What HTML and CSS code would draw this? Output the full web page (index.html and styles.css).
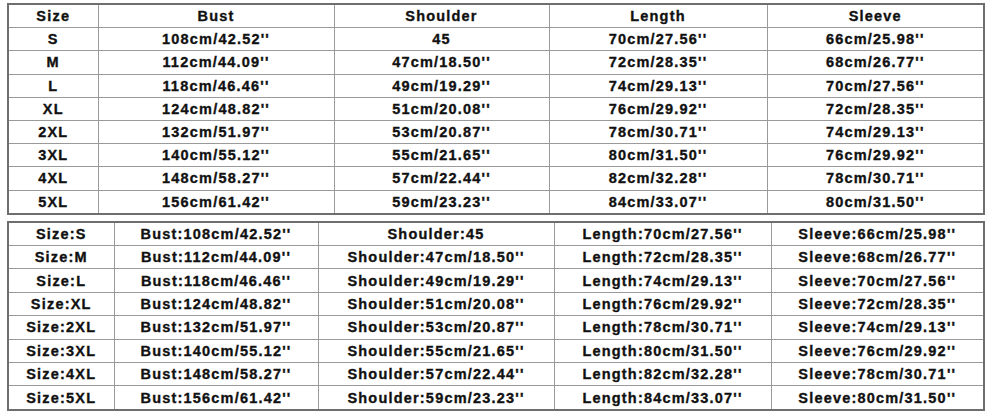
FILE: index.html
```html
<!DOCTYPE html>
<html>
<head>
<meta charset="utf-8">
<link rel="stylesheet" href="styles.css">
</head>
<body>
<div class="page">
<table class="chart chart-top">
<colgroup><col class="c1"><col class="c2"><col class="c3"><col class="c4"><col class="c5"></colgroup>
<tr><td>Size</td><td>Bust</td><td>Shoulder</td><td>Length</td><td>Sleeve</td></tr>
<tr><td>S</td><td>108cm/42.52''</td><td>45</td><td>70cm/27.56''</td><td>66cm/25.98''</td></tr>
<tr><td>M</td><td>112cm/44.09''</td><td>47cm/18.50''</td><td>72cm/28.35''</td><td>68cm/26.77''</td></tr>
<tr><td>L</td><td>118cm/46.46''</td><td>49cm/19.29''</td><td>74cm/29.13''</td><td>70cm/27.56''</td></tr>
<tr><td>XL</td><td>124cm/48.82''</td><td>51cm/20.08''</td><td>76cm/29.92''</td><td>72cm/28.35''</td></tr>
<tr><td>2XL</td><td>132cm/51.97''</td><td>53cm/20.87''</td><td>78cm/30.71''</td><td>74cm/29.13''</td></tr>
<tr><td>3XL</td><td>140cm/55.12''</td><td>55cm/21.65''</td><td>80cm/31.50''</td><td>76cm/29.92''</td></tr>
<tr><td>4XL</td><td>148cm/58.27''</td><td>57cm/22.44''</td><td>82cm/32.28''</td><td>78cm/30.71''</td></tr>
<tr><td>5XL</td><td>156cm/61.42''</td><td>59cm/23.23''</td><td>84cm/33.07''</td><td>80cm/31.50''</td></tr>
</table>
<table class="chart chart-bottom">
<colgroup><col class="d1"><col class="d2"><col class="d3"><col class="d4"><col class="d5"></colgroup>
<tr><td>Size:S</td><td>Bust:108cm/42.52''</td><td>Shoulder:45</td><td>Length:70cm/27.56''</td><td>Sleeve:66cm/25.98''</td></tr>
<tr><td>Size:M</td><td>Bust:112cm/44.09''</td><td>Shoulder:47cm/18.50''</td><td>Length:72cm/28.35''</td><td>Sleeve:68cm/26.77''</td></tr>
<tr><td>Size:L</td><td>Bust:118cm/46.46''</td><td>Shoulder:49cm/19.29''</td><td>Length:74cm/29.13''</td><td>Sleeve:70cm/27.56''</td></tr>
<tr><td>Size:XL</td><td>Bust:124cm/48.82''</td><td>Shoulder:51cm/20.08''</td><td>Length:76cm/29.92''</td><td>Sleeve:72cm/28.35''</td></tr>
<tr><td>Size:2XL</td><td>Bust:132cm/51.97''</td><td>Shoulder:53cm/20.87''</td><td>Length:78cm/30.71''</td><td>Sleeve:74cm/29.13''</td></tr>
<tr><td>Size:3XL</td><td>Bust:140cm/55.12''</td><td>Shoulder:55cm/21.65''</td><td>Length:80cm/31.50''</td><td>Sleeve:76cm/29.92''</td></tr>
<tr><td>Size:4XL</td><td>Bust:148cm/58.27''</td><td>Shoulder:57cm/22.44''</td><td>Length:82cm/32.28''</td><td>Sleeve:78cm/30.71''</td></tr>
<tr><td>Size:5XL</td><td>Bust:156cm/61.42''</td><td>Shoulder:59cm/23.23''</td><td>Length:84cm/33.07''</td><td>Sleeve:80cm/31.50''</td></tr>
</table>
</div>
</body>
</html>
```
FILE: styles.css
```css
html, body {
  margin: 0;
  padding: 0;
  background: #ffffff;
}
.page {
  padding: 3px 4px 0 7px;
  display: flex;
  flex-direction: column;
  gap: 6px;
}
.chart {
  border-collapse: collapse;
  table-layout: fixed;
  width: 976px;
  border: 2px solid #6e6e6e;
  font-family: "Liberation Sans", Arial, sans-serif;
  font-weight: bold;
  font-size: 14.5px;
  letter-spacing: 1.2px;
  color: #111111;
  -webkit-text-stroke: 0.35px #111111;
}
.chart td {
  border: 1px solid #9a9a9a;
  text-align: center;
  padding: 0;
  line-height: 16px;
  white-space: nowrap;
}
.chart-top td { height: 22.2px; }
.chart-bottom td { height: 22.4px; }
.c1 { width: 90px; }
.c2 { width: 236px; }
.c3 { width: 215px; }
.c4 { width: 218px; }
.c5 { width: 217px; }
.d1 { width: 106px; }
.d2 { width: 204px; }
.d3 { width: 236px; }
.d4 { width: 217px; }
.d5 { width: 213px; }
```
